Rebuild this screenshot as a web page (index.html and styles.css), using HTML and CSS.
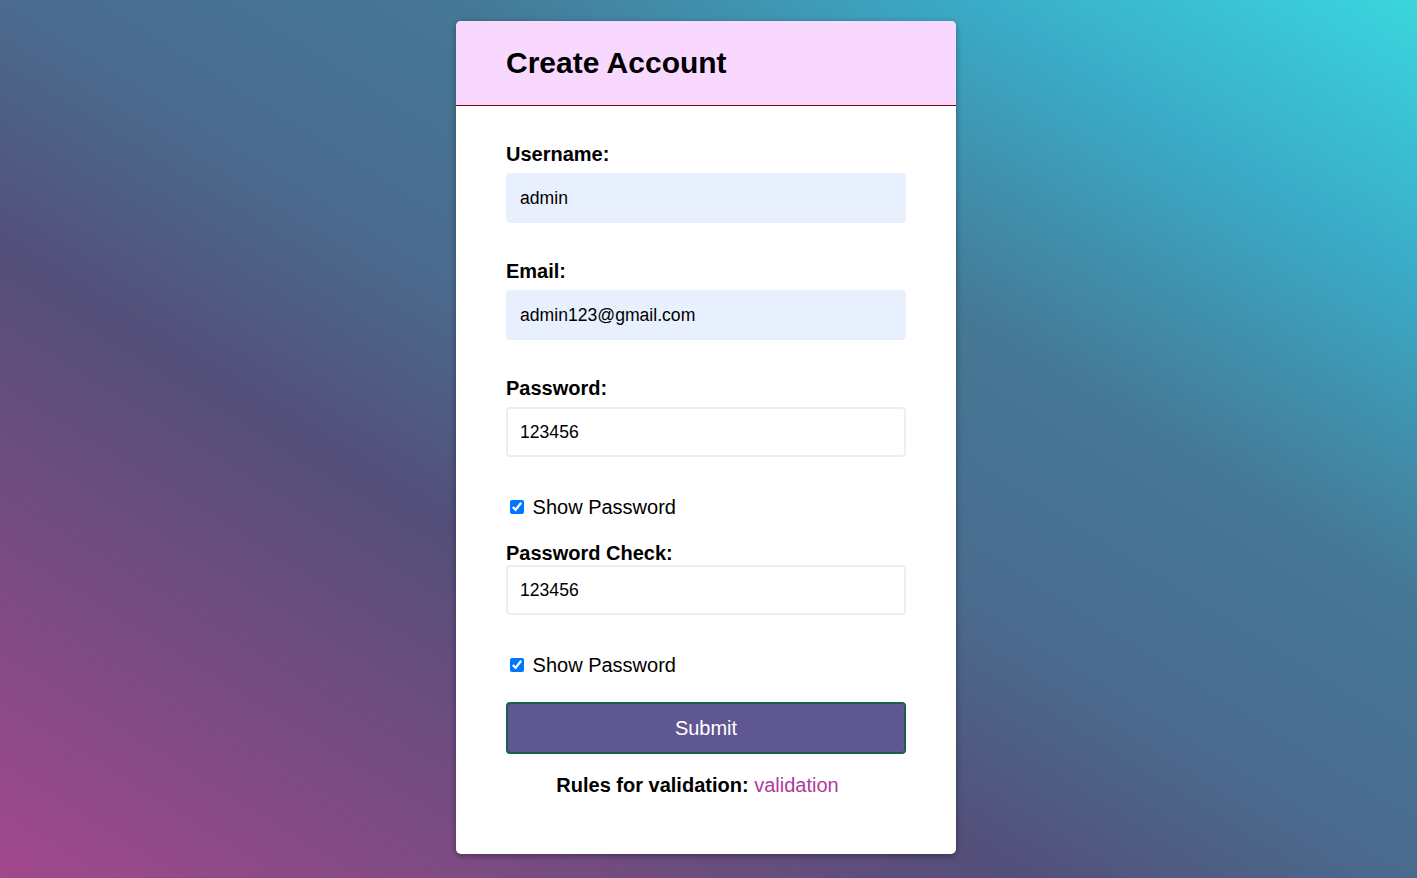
FILE: index.html
```html
<!DOCTYPE html>
<html lang="en">
<head>
<meta charset="utf-8">
<title>Create Account</title>
<link rel="stylesheet" href="styles.css">
</head>
<body>
<div class="page">
  <div class="card">
    <div class="card-header">
      <h1 class="title">Create Account</h1>
    </div>
    <form class="card-body">
      <label class="label" for="username">Username:</label>
      <input class="input filled" id="username" type="text" value="admin">

      <label class="label gap-top" for="email">Email:</label>
      <input class="input filled" id="email" type="email" value="admin123@gmail.com">

      <label class="label gap-top" for="password">Password:</label>
      <input class="input" id="password" type="text" value="123456">

      <label class="check"><input type="checkbox" checked> Show Password</label>

      <label class="label after-check" for="password2">Password Check:</label>
      <input class="input" id="password2" type="text" value="123456">

      <label class="check"><input type="checkbox" checked> Show Password</label>

      <button class="submit" type="button">Submit</button>

      <p class="rules"><b>Rules for validation:</b> <a class="rules-link" href="#">validation</a></p>
    </form>
  </div>
</div>
</body>
</html>
```

FILE: styles.css
```css
html, body {
  margin: 0;
  padding: 0;
  height: 100%;
}

body {
  font-family: "Liberation Sans", Arial, sans-serif;
  background: linear-gradient(to top right,
    #a2488c 0%,
    #534f7a 36%,
    #4a6b8e 50%,
    #457895 66%,
    #3aabc7 84%,
    #3ad6de 100%);
  min-height: 100vh;
}

.page {
  display: flex;
  justify-content: center;
  padding-top: 21px;
  padding-right: 5px;
}

.card {
  width: 500px;
  background: #ffffff;
  border-radius: 5px;
  box-shadow: 0 2px 6px rgba(0, 0, 0, 0.35);
  overflow: hidden;
}

.card-header {
  height: 85px;
  box-sizing: border-box;
  background: #f8d8fe;
  border-bottom: 1px solid #800000;
  padding: 0 50px;
  display: flex;
  align-items: center;
}

.title {
  margin: 0;
  font-size: 30px;
  font-weight: bold;
  color: #000;
}

.card-body {
  display: flex;
  flex-direction: column;
  padding: 37px 50px 57px;
}

.label {
  display: block;
  font-size: 20px;
  font-weight: bold;
  line-height: 23px;
  color: #000;
  margin-bottom: 7px;
}

.gap-top {
  margin-top: 37px;
}

.after-check {
  margin-top: 23px;
  margin-bottom: 0;
}

.input {
  box-sizing: border-box;
  width: 400px;
  height: 50px;
  margin: 0;
  padding: 0 12px;
  border: 2px solid #eeeeee;
  border-radius: 4px;
  background: #ffffff;
  font-family: "Liberation Sans", Arial, sans-serif;
  font-size: 17.6px;
  color: #000;
  outline: none;
}

.input.filled {
  background: #e8f0fe;
  border-color: #e8f0fe;
}

.check {
  display: block;
  margin-top: 39px;
  font-size: 20px;
  line-height: 23px;
  color: #000;
}

.check input {
  width: 14px;
  height: 14px;
  margin: 3px 3px 3px 4px;
}

.submit {
  margin-top: 25px;
  width: 400px;
  height: 52px;
  box-sizing: border-box;
  background: #5f5791;
  border: 2px solid #1b5e4f;
  border-radius: 4px;
  color: #ffffff;
  font-family: "Liberation Sans", Arial, sans-serif;
  font-size: 20px;
  padding: 0;
}

.rules {
  margin: 20px 0 0;
  padding-right: 17px;
  text-align: center;
  font-size: 20px;
  line-height: 23px;
  color: #000;
}

.rules-link {
  color: #b0399e;
  text-decoration: none;
}
```
